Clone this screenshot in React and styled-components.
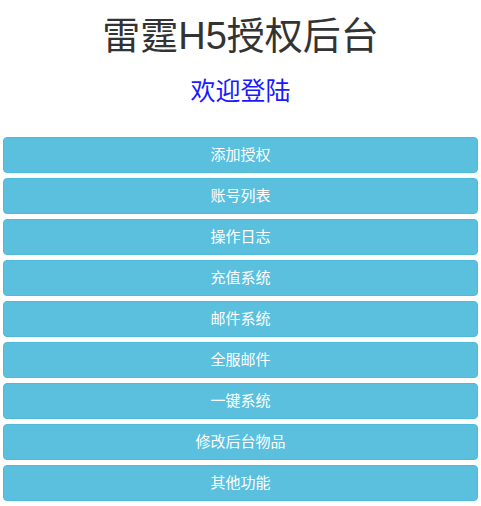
import React from 'react'
import styled, { createGlobalStyle } from 'styled-components'

const GlobalStyle = createGlobalStyle`
  html, body {
    margin: 0;
    padding: 0;
    background: #fff;
    font-family: "Liberation Sans", "Noto Sans CJK SC", sans-serif;
  }
`

const Page = styled.div`
  display: flex;
  flex-direction: column;
  align-items: stretch;
  padding: 0 3px;
`

const Title = styled.h1`
  margin: 14px 0 0;
  text-align: center;
  font-size: 38px;
  line-height: 44px;
  font-weight: 400;
  color: #333;
`

const SubTitle = styled.h3`
  margin: 17px 0 0;
  text-align: center;
  font-size: 25px;
  line-height: 33px;
  font-weight: 400;
  color: #1a1aff;
`

const Menu = styled.div`
  display: flex;
  flex-direction: column;
  gap: 5px;
  margin-top: 29px;
`

const MenuButton = styled.button`
  display: block;
  width: 100%;
  height: 36px;
  padding: 7px 12px;
  border: 1px solid #4fbbdb;
  border-radius: 4px;
  background: #5bc0de;
  color: #fff;
  font-family: "Liberation Sans", "Noto Sans CJK SC", sans-serif;
  font-size: 15px;
  line-height: 20px;
  cursor: pointer;
`

const items = ['添加授权', '账号列表', '操作日志', '充值系统', '邮件系统', '全服邮件', '一键系统', '修改后台物品', '其他功能']

export default function App() {
  return (
    <>
      <GlobalStyle />
      <Page>
        <Title>雷霆H5授权后台</Title>
        <SubTitle>欢迎登陆</SubTitle>
        <Menu>
          {items.map((label) => (
            <MenuButton key={label}>{label}</MenuButton>
          ))}
        </Menu>
      </Page>
    </>
  )
}
